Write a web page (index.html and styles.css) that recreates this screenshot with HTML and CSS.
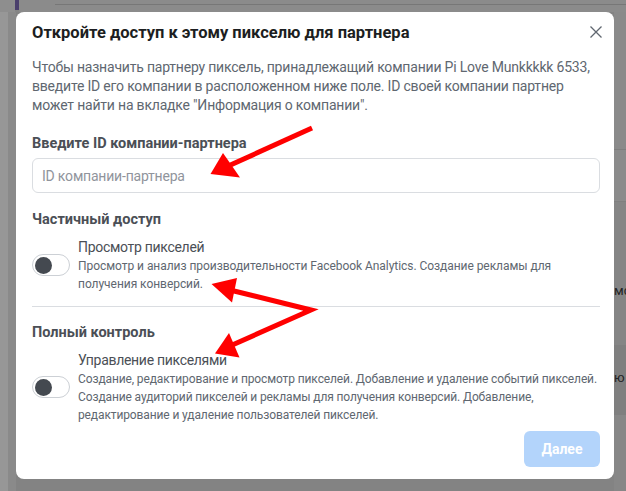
FILE: index.html
```html
<!DOCTYPE html>
<html lang="ru">
<head>
<meta charset="utf-8">
<title>Открыть доступ</title>
<link rel="stylesheet" href="styles.css">
</head>
<body>
<div class="top">
  <div class="top-left"></div>
  <div class="top-purple"></div>
  <div class="top-rest"></div>
</div>
<div class="main">
  <div class="side-left"><div class="sl-a"></div><div class="sl-b"></div></div>
  <div class="dialog">
    <div class="head">
      <h1 class="title">Откройте доступ к этому пикселю для партнера</h1>
      <svg class="close" width="12" height="12" viewBox="0 0 12 12"><path d="M0.5 0.5L11.5 11.5M11.5 0.5L0.5 11.5" stroke="#606770" stroke-width="1.3" fill="none"/></svg>
    </div>
    <p class="intro">Чтобы назначить партнеру пиксель, принадлежащий компании Pi Love Munkkkkk 6533,<br>введите ID его компании в расположенном ниже поле. ID своей компании партнер<br>может найти на вкладке "Информация о компании".</p>
    <div class="label">Введите ID компании-партнера</div>
    <div class="input"><span class="placeholder">ID компании-партнера</span></div>
    <div class="section">Частичный доступ</div>
    <div class="row row-first">
      <div class="toggle"><span class="knob"></span></div>
      <div class="row-text">
        <div class="row-title">Просмотр пикселей</div>
        <div class="row-desc">Просмотр и анализ производительности Facebook Analytics. Создание рекламы для<br>получения конверсий.</div>
      </div>
    </div>
    <div class="divider"></div>
    <div class="section">Полный контроль</div>
    <div class="row row-second">
      <div class="toggle"><span class="knob"></span></div>
      <div class="row-text">
        <div class="row-title">Управление пикселями</div>
        <div class="row-desc">Создание, редактирование и просмотр пикселей. Добавление и удаление событий пикселей.<br>Создание аудиторий пикселей и рекламы для получения конверсий. Добавление,<br>редактирование и удаление пользователей пикселей.</div>
      </div>
    </div>
    <div class="foot"><button class="next">Далее</button></div>
  </div>
  <div class="side-right">
    <div class="sr-1"></div>
    <div class="sr-2"></div>
    <div class="sr-3"><span class="frag">мс</span></div>
    <div class="sr-4"><span class="frag">ю</span></div>
    <div class="sr-5"></div>
  </div>
</div>
<svg class="arrows" width="626" height="491" viewBox="0 0 626 491">
  <line x1="312" y1="128" x2="226" y2="167" stroke="#ff0000" stroke-width="5"/>
  <polygon points="210.5,174 223,153 240,177.5" fill="#ff0000"/>
  <polyline points="230,290 311,310 230,346" stroke="#ff0000" stroke-width="5" fill="none" stroke-linejoin="miter"/>
  <polygon points="211.5,284 237,278 232,302.5" fill="#ff0000"/>
  <polygon points="215,353.5 229,333 239.5,357.5" fill="#ff0000"/>
</svg>
</body>
</html>
```
FILE: styles.css
```css
* { box-sizing: border-box; }
html, body { margin: 0; padding: 0; }
body {
  width: 626px;
  height: 491px;
  overflow: hidden;
  position: relative;
  background: #858585;
  font-family: Roboto, "Noto Sans", Arial, sans-serif;
}
.top { display: flex; height: 12px; }
.top-left { width: 15px; background: #8e8e8e; }
.top-purple { width: 4px; height: 10px; background: #4a3f6c; }
.top-rest {
  flex: 1;
  background: linear-gradient(#777, #777) no-repeat 36px 4px / 100% 1px, #8b8b8b;
}
.main { display: flex; height: 479px; background: #838383; }
.side-left { width: 16px; display: flex; }
.sl-a { width: 8px; background: #979797; }
.sl-b { width: 8px; background: #8a8a8a; }
.dialog {
  width: 598px;
  height: 467px;
  background: #fff;
  border-radius: 8px;
  padding: 10px 14px 12px 16px;
  display: flex;
  flex-direction: column;
}
.head { display: flex; align-items: center; justify-content: space-between; height: 20px; }
.title {
  margin: 0;
  font-size: 16.5px;
  line-height: 20px;
  font-weight: 700;
  color: #1c1e21;
  padding-top: 1px;
}
.close { margin-right: -2px; }
.intro {
  margin: 16px -10px 0 0;
  font-size: 14px;
  letter-spacing: -0.2px;
  line-height: 19px;
  color: #606770;
}
.label {
  margin-top: 20px;
  font-size: 14.5px;
  line-height: 18px;
  font-weight: 700;
  color: #4b4f56;
}
.input {
  margin-top: 5px;
  height: 35px;
  border: 1px solid #dadde1;
  border-radius: 6px;
  padding: 0 9px;
  display: flex;
  align-items: center;
}
.placeholder { font-size: 14px; letter-spacing: -0.2px; color: #90949c; }
.section {
  margin-top: 18px;
  font-size: 14.5px;
  line-height: 18px;
  font-weight: 700;
  color: #4b4f56;
}
.divider + .section { margin-top: 17px; }
.row { display: flex; align-items: center; margin-top: 8px; }
.toggle {
  flex: none;
  width: 38px;
  height: 22px;
  border: 1px solid #ccd0d5;
  border-radius: 12px;
  margin-right: 8px;
  padding-left: 2px;
  display: flex;
  align-items: center;
}
.knob { width: 17px; height: 17px; border-radius: 50%; background: #444950; }
.row-text { margin-right: -14px; }
.row-title { font-size: 14px; letter-spacing: -0.3px; line-height: 20px; color: #4b4f56; }
.row-desc { font-size: 12px; letter-spacing: -0.05px; line-height: 18px; color: #606770; }
.row-second .row-desc { letter-spacing: -0.12px; }
.divider { margin-top: 13px; height: 1px; background: #dadde1; }
.foot { display: flex; justify-content: flex-end; margin-top: 7px; }
.next {
  width: 76px;
  height: 36px;
  border: none;
  border-radius: 6px;
  background: #b3d4fb;
  color: #fff;
  font-family: inherit;
  font-size: 14px;
  font-weight: 700;
}
.side-right { width: 12px; display: flex; flex-direction: column; overflow: hidden; }
.sr-1 { height: 138px; background: #8a8a8a; border-bottom: 1px solid #7e7e7e; }
.sr-2 { height: 52px; background: #8b8b8b; border-bottom: 1px solid #7f7f7f; }
.sr-3 { height: 143px; background: #858585; padding-top: 80px; }
.sr-4 { height: 70px; background: #7f7f7f; padding-top: 24px; }
.sr-5 { flex: 1; background: #878787; }
.frag { display: block; font-size: 13px; line-height: 18px; color: #222; white-space: nowrap; }
.arrows { position: absolute; left: 0; top: 0; pointer-events: none; }
```
